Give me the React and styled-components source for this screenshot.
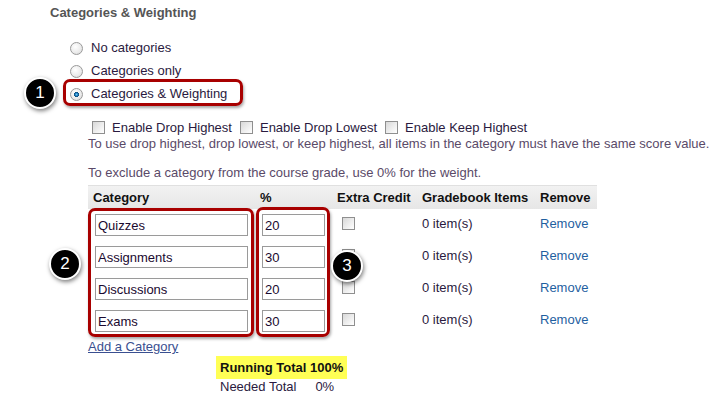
import React from 'react'
import styled, { createGlobalStyle } from 'styled-components'

const GlobalStyle = createGlobalStyle`
  body {
    margin: 0;
    background: #fff;
    font-family: "Liberation Sans", Arial, sans-serif;
    font-size: 13px;
    color: #2a1a40;
  }
`

const Page = styled.div`
  position: relative;
  width: 720px;
  height: 400px;
  overflow: hidden;
`

const Title = styled.h3`
  margin: 0;
  padding: 5px 0 0 50px;
  font-size: 13px;
  font-weight: bold;
  color: #555;
  line-height: 16px;
`

const RadioList = styled.div`
  display: flex;
  flex-direction: column;
  gap: 7px;
  padding: 19px 0 0 70px;
`

const RadioRow = styled.label`
  display: flex;
  align-items: center;
  gap: 8px;
  height: 16px;
  line-height: 16px;
`

const Radio = styled.input.attrs({ type: 'radio' })`
  appearance: none;
  margin: 0;
  width: 13px;
  height: 13px;
  border-radius: 50%;
  border: 1px solid #9a9a9a;
  background: radial-gradient(circle at 40% 35%, #fff 0%, #eaeaea 60%, #d2d2d2 100%);
  box-sizing: border-box;
  &:checked {
    background:
      radial-gradient(circle at 50% 50%, #6fc4f0 0%, #1e7fc0 18%, #0b4a78 30%, transparent 34%),
      radial-gradient(circle at 40% 35%, #fff 0%, #eaeaea 60%, #d2d2d2 100%);
  }
`

const Options = styled.div`
  padding: 17px 0 0 88px;
`

const CheckRow = styled.div`
  display: flex;
  align-items: center;
  height: 16px;
  padding-left: 4px;
`

const CheckLabel = styled.label`
  display: flex;
  align-items: center;
  gap: 7px;
  margin-right: 8px;
`

const Box = styled.input.attrs({ type: 'checkbox' })`
  appearance: none;
  margin: 0;
  width: 13px;
  height: 13px;
  border: 1px solid #8f8f8f;
  box-sizing: border-box;
  background: linear-gradient(135deg, #d8d8d8 0%, #f0f0f0 60%, #fff 100%);
`

const Note = styled.p`
  margin: 0;
  color: #5a4a68;
  line-height: 16px;
  margin-top: ${p => p.$gap || 0}px;
`

const Table = styled.div`
  display: grid;
  grid-template-columns: 167px 78px 85px 118px 61px;
  margin-top: 4px;
  width: 509px;
`

const Head = styled.div`
  background: linear-gradient(#f2f2f2, #e6e6e6);
  border-top: 1px solid #e0e0e0;
  font-weight: bold;
  color: #111;
  height: 23px;
  line-height: 23px;
  padding-left: ${p => p.$pad || 4}px;
`

const Cell = styled.div`
  height: 32px;
  box-sizing: border-box;
  padding-top: ${p => p.$top || 5}px;
  padding-left: ${p => p.$pad || 4}px;
  line-height: 16px;
  color: ${p => p.$color || '#2a1a40'};
`

const TextBox = styled.input`
  display: block;
  margin: 0;
  width: ${p => p.$w}px;
  height: 22px;
  box-sizing: border-box;
  border: 1px solid #9a9a9a;
  padding: 0 2px;
  font: 13px "Liberation Sans", Arial, sans-serif;
  color: #1a0a30;
  background: #fff;
`

const RemoveLink = styled.a`
  color: #1f5f9f;
  text-decoration: none;
`

const AddLink = styled.a`
  display: block;
  color: #3a4f90;
  text-decoration: underline;
  margin-top: 2px;
  line-height: 16px;
`

const Totals = styled.div`
  margin: 1px 0 0 128px;
`

const Running = styled.div`
  display: inline-block;
  background: #ffff55;
  font-weight: bold;
  color: #111;
  padding: 3px 4px;
  line-height: 17px;
`

const Needed = styled.div`
  display: flex;
  gap: 19px;
  padding-left: 4px;
  line-height: 16px;
`

const Highlight = styled.div`
  position: absolute;
  border: 3px solid #a80000;
  border-radius: 7px;
  box-shadow: 1px 2px 3px rgba(0, 0, 0, 0.35);
  pointer-events: none;
`

const Badge = styled.div`
  position: absolute;
  width: 28px;
  height: 28px;
  border-radius: 50%;
  background: #000;
  border: 2px solid #fff;
  box-shadow: 1px 2px 4px rgba(0, 0, 0, 0.5);
  color: #fff;
  font-size: 17px;
  line-height: 28px;
  text-align: center;
`

const rows = [
  { name: 'Quizzes', pct: '20' },
  { name: 'Assignments', pct: '30' },
  { name: 'Discussions', pct: '20' },
  { name: 'Exams', pct: '30' }
]

export default function App () {
  return (
    <Page>
      <GlobalStyle />
      <Title>Categories &amp; Weighting</Title>
      <RadioList>
        <RadioRow><Radio name='mode' />No categories</RadioRow>
        <RadioRow><Radio name='mode' />Categories only</RadioRow>
        <RadioRow><Radio name='mode' defaultChecked />Categories &amp; Weighting</RadioRow>
      </RadioList>
      <Options>
        <CheckRow>
          <CheckLabel><Box />Enable Drop Highest</CheckLabel>
          <CheckLabel><Box />Enable Drop Lowest</CheckLabel>
          <CheckLabel><Box />Enable Keep Highest</CheckLabel>
        </CheckRow>
        <Note $gap={1}>To use drop highest, drop lowest, or keep highest, all items in the category must have the same score value.</Note>
        <Note $gap={13}>To exclude a category from the course grade, use 0% for the weight.</Note>
        <Table>
          <Head $pad={5}>Category</Head>
          <Head $pad={5}>%</Head>
          <Head>Extra Credit</Head>
          <Head>Gradebook Items</Head>
          <Head>Remove</Head>
          {rows.map(r => (
            <React.Fragment key={r.name}>
              <Cell $pad={7}><TextBox $w={153} defaultValue={r.name} /></Cell>
              <Cell $pad={7}><TextBox $w={63} defaultValue={r.pct} /></Cell>
              <Cell $pad={9} $top={8}><Box /></Cell>
              <Cell $top={7}>0 item(s)</Cell>
              <Cell $top={7}><RemoveLink href='#'>Remove</RemoveLink></Cell>
            </React.Fragment>
          ))}
        </Table>
        <AddLink href='#'>Add a Category</AddLink>
        <Totals>
          <Running>Running Total 100%</Running>
          <Needed><span>Needed Total</span><span>0%</span></Needed>
        </Totals>
      </Options>

      <Highlight style={{ left: 63, top: 79, width: 174, height: 21 }} />
      <Highlight style={{ left: 88, top: 208, width: 160, height: 123 }} />
      <Highlight style={{ left: 256, top: 207, width: 68, height: 124 }} />
      <Badge style={{ left: 24, top: 77 }}>1</Badge>
      <Badge style={{ left: 49, top: 248 }}>2</Badge>
      <Badge style={{ left: 331, top: 250 }}>3</Badge>
    </Page>
  )
}
